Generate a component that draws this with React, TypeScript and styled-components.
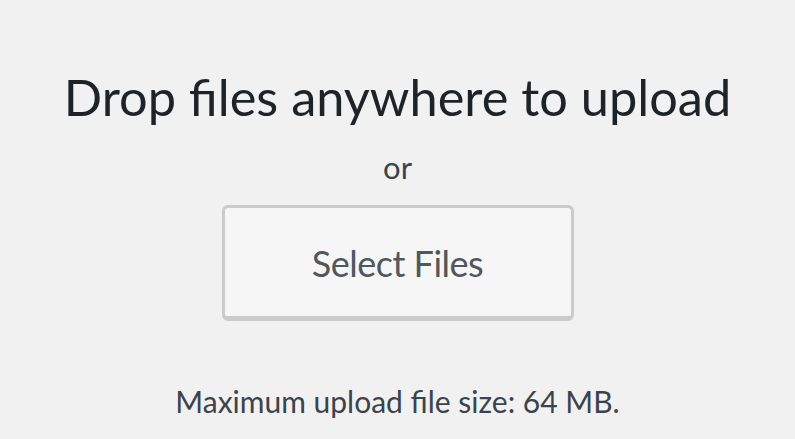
import React from "react";
import styled, { createGlobalStyle } from "styled-components";

const GlobalStyle = createGlobalStyle`
  html, body {
    margin: 0;
    padding: 0;
    background: #f1f1f1;
  }
  body {
    font-family: Lato, "Open Sans", "Liberation Sans", sans-serif;
  }
`;

const Uploader = styled.div`
  width: 795px;
  height: 439px;
  box-sizing: border-box;
  padding-top: 67px;
  display: flex;
  flex-direction: column;
  align-items: center;
  overflow: hidden;
`;

const Title = styled.h2`
  margin: 0;
  font-size: 50.5px;
  line-height: 1.2;
  font-weight: 400;
  color: #1d2327;
`;

const Or = styled.p`
  margin: 21px 0 0;
  font-size: 31px;
  line-height: 1.2;
  color: #3c434a;
`;

const SelectButton = styled.button`
  margin-top: 19px;
  width: 352px;
  height: 116px;
  box-sizing: border-box;
  display: flex;
  align-items: center;
  justify-content: center;
  padding: 3px 0 0;
  border: 3px solid #cbcbcb;
  border-bottom-width: 5px;
  border-radius: 6px;
  background: #f6f6f6;
  font-family: inherit;
  font-size: 36px;
  letter-spacing: -0.5px;
  line-height: 1.2;
  color: #50575e;
  cursor: pointer;
`;

const MaxSize = styled.p`
  margin: 62px 0 0;
  font-size: 30px;
  line-height: 1.2;
  color: #3c434a;
`;

const App = () => {
  return (
    <>
      <GlobalStyle />
      <Uploader>
        <Title>Drop files anywhere to upload</Title>
        <Or>or</Or>
        <SelectButton type="button">Select Files</SelectButton>
        <MaxSize>Maximum upload file size: 64 MB.</MaxSize>
      </Uploader>
    </>
  );
};

export default App;
